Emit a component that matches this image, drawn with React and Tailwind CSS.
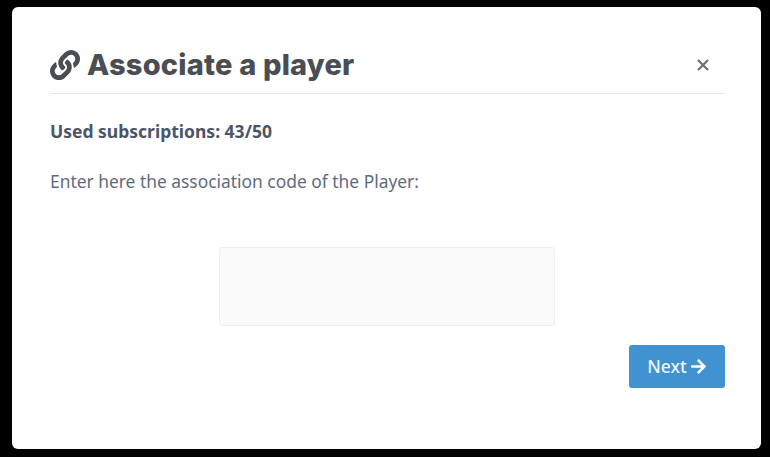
import React from "react";
import { FaLink, FaArrowRight } from "react-icons/fa";

export default function App() {
  return (
    <div className="h-[457px] w-[770px] overflow-hidden bg-black pl-[12px] pt-[7px] font-['Noto_Sans','Open_Sans',sans-serif]">
      <div className="flex h-[442px] w-[749px] flex-col rounded-[6px] bg-white pl-[38px] pr-[36px]">
        <div className="mt-[30px] flex h-[57px] items-center justify-between border-b border-[#e5e7eb]">
          <h1 className="flex items-center font-['Inter',sans-serif] text-[29px] font-extrabold leading-none tracking-[0.2px] text-[#4a4d52]">
            <FaLink className="mr-[7px] h-[30px] w-[30px]" />
            <span className="-translate-y-px">Associate a player</span>
          </h1>
          <button className="mr-[14px] flex h-[16px] w-[16px] items-center justify-center text-[#6b6e73]">
            <svg viewBox="0 0 12 12" className="h-[12px] w-[12px]" fill="none" stroke="currentColor" strokeWidth="2.2">
              <path d="M1 1l10 10M11 1L1 11" />
            </svg>
          </button>
        </div>
        <p className="mt-[25px] text-[17.5px] font-bold leading-[24px] text-[#4a5568]">Used subscriptions: 43/50</p>
        <p className="mt-[26px] text-[17.4px] leading-[24px] text-[#5f6b7d]">Enter here the association code of the Player:</p>
        <div className="mt-[54px] flex justify-center pr-[2px]">
          <div className="h-[79px] w-[336px] rounded-[3px] border border-[#efefef] bg-[#fafafa]" />
        </div>
        <div className="mt-[19px] flex justify-end">
          <button className="flex h-[43px] w-[96px] items-center justify-center gap-[3px] rounded-[3px] bg-[#4093d0] text-[17.5px] font-medium text-[#eef6fb]">
            Next
            <FaArrowRight className="h-[17px] w-[17px] text-white" />
          </button>
        </div>
      </div>
    </div>
  );
}
